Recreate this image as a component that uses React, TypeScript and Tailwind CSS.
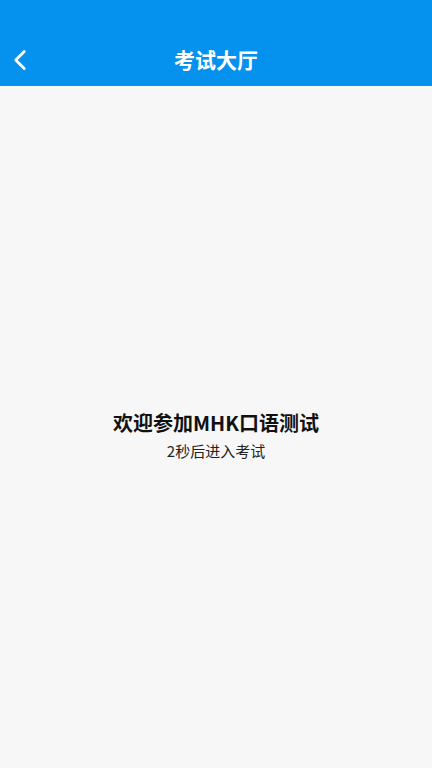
import { ChevronLeft } from "lucide-react";

const font = { fontFamily: '"Noto Sans CJK SC", Roboto, sans-serif' };

export default function App() {
  return (
    <div className="flex min-h-[768px] flex-col bg-[#f7f7f7]" style={font}>
      <header className="flex h-[86px] shrink-0 items-end bg-[#0592ee] pb-[4px]">
        <div className="relative flex h-[44px] w-full items-center justify-center">
          <button type="button" className="absolute left-[2px] flex h-[44px] w-[36px] items-center justify-center text-white">
            <ChevronLeft size={34} strokeWidth={2} />
          </button>
          <h1 className="text-[21px] font-bold text-white">考试大厅</h1>
        </div>
      </header>
      <main className="flex flex-1 flex-col items-center justify-center pt-[16px]">
        <p className="text-[20px] font-bold leading-[30px] text-[#111]">欢迎参加MHK口语测试</p>
        <p className="mt-[1px] text-[15px] leading-[24px] text-[#222]">2秒后进入考试</p>
      </main>
    </div>
  );
}
